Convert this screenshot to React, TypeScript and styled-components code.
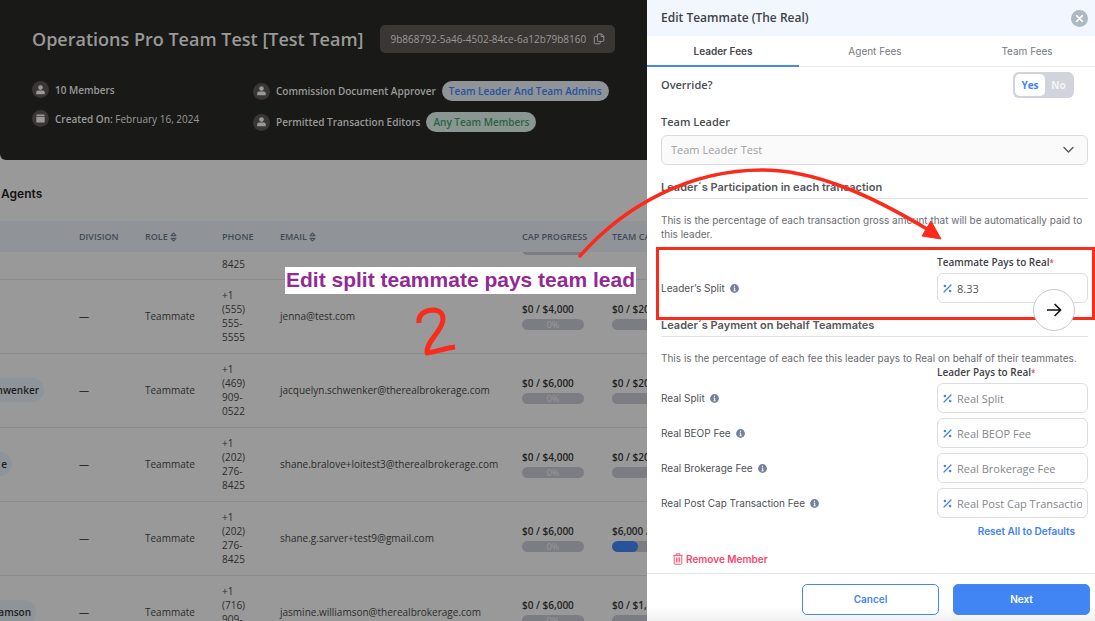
import React from "react";
import styled, { createGlobalStyle } from "styled-components";

const GlobalStyle = createGlobalStyle`
  *, *::before, *::after { box-sizing: border-box; }
  body { margin: 0; background: #999; font-family: "Open Sans", "Noto Sans", sans-serif; }
  h1, h2, h3, p, fieldset, dl, dd { margin: 0; padding: 0; border: 0; }
  button, input, select { font-family: inherit; }
  button { cursor: pointer; }
`;

const Screen = styled.div`
  position: relative;
  display: grid;
  grid-template-columns: minmax(0, 1fr) 448px;
  height: 100vh;
  overflow: hidden;
`;

const Page = styled.main`
  min-width: 0;
  overflow: hidden;
  background: #999;
`;

const Banner = styled.header`
  height: 160px;
  padding: 25px 32px 0;
  background: #191917;
  border-bottom-left-radius: 6px;
  color: #999;
`;

const TitleRow = styled.div`
  display: flex;
  align-items: center;
  gap: 17px;
  white-space: nowrap;
`;

const TeamTitle = styled.h1`
  font-size: 18px;
  line-height: 26px;
  font-weight: 600;
  color: #999;
`;

const IdButton = styled.button`
  display: flex;
  align-items: center;
  gap: 7px;
  height: 28px;
  padding: 0 10px;
  border: 0;
  border-radius: 5px;
  background: #3a3633;
  color: #999;
  font-size: 10px;
`;

const Facts = styled.div`
  display: grid;
  grid-template-columns: 221px auto;
  justify-content: start;
  margin-top: 28px;
`;

const FactList = styled.div<{ $gap: number }>`
  display: flex;
  flex-direction: column;
  gap: ${(p) => p.$gap}px;
`;

const Fact = styled.div<{ $h: number }>`
  display: flex;
  align-items: center;
  gap: 6px;
  height: ${(p) => p.$h}px;
  font-size: 10px;
  font-weight: 600;
  white-space: nowrap;

  span { font-weight: 400; }
`;

const FactIcon = styled.i`
  display: grid;
  place-items: center;
  width: 17px;
  height: 17px;
  border-radius: 50%;
  background: #3a3633;
`;

const Tag = styled.b<{ $tone: "blue" | "green" }>`
  height: 20px;
  padding: 0 7px;
  border-radius: 10px;
  line-height: 20px;
  font-weight: 600;
  background: ${(p) => (p.$tone === "blue" ? "#8f9499" : "#8a9691")};
  color: ${(p) => (p.$tone === "blue" ? "#28529b" : "#2a6247")};
`;

const AgentsTitle = styled.h2`
  padding: 24px 1px 18px;
  font-family: Inter, sans-serif;
  font-size: 12px;
  line-height: 19px;
  font-weight: 600;
  color: #141414;
`;

const AgentTable = styled.table`
  width: 100%;
  min-width: 742px;
  table-layout: fixed;
  border-collapse: collapse;
  font-size: 10px;
  line-height: 14px;
  color: #2c2c2c;

  td, th { padding: 0; text-align: left; white-space: nowrap; }
`;

const Col = styled.col<{ $w?: number }>`
  width: ${(p) => (p.$w ? `${p.$w}px` : "auto")};
`;

const HeadRow = styled.tr`
  height: 31px;
  background: #909397;
  color: #434a57;
  font-size: 9px;
  font-weight: 600;

  th { font-weight: 600; }
  svg { vertical-align: -2px; }
`;

const BodyRow = styled.tr<{ $cut?: boolean }>`
  height: ${(p) => (p.$cut ? 27 : 74)}px;
  border-bottom: 1px solid #8a8a8a;
  td { vertical-align: ${(p) => (p.$cut ? "top" : "middle")}; }
`;

const CutPhone = styled.div`
  padding-top: 5px;
`;

const CutMeter = styled.div`
  display: flex;
  flex-direction: column;
  justify-content: flex-end;
  height: 3px;
  overflow: hidden;
`;

const ChipWindow = styled.div<{ $w: number }>`
  display: flex;
  justify-content: flex-end;
  width: ${(p) => p.$w}px;
  overflow: hidden;
`;

const Chip = styled.span`
  flex: none;
  height: 24px;
  padding: 0 5px 0 16px;
  border-radius: 12px;
  background: #8f9499;
  color: #1e1e1e;
  font-weight: 600;
  line-height: 24px;
`;

const Cap = styled.div`
  margin-bottom: 3px;
  font-weight: 600;
  color: #222;
`;

const Meter = styled.div`
  flex: none;
  width: 62px;
  height: 11px;
  border-radius: 6px;
  overflow: hidden;
  background: #7c7d83;
  color: #999;
  font-size: 9px;
  line-height: 11px;
  text-align: center;
`;

const MeterFill = styled.div`
  height: 11px;
  border-radius: 6px;
  background: #285399;
`;

const Drawer = styled.aside`
  display: flex;
  flex-direction: column;
  min-width: 0;
  background: #fff;
  color: #4a4a4a;
`;

const DrawerHead = styled.header`
  display: flex;
  align-items: center;
  justify-content: space-between;
  height: 36px;
  padding: 0 7px 0 14px;
  background: #f2f6fe;

  h2 { font-size: 12px; line-height: 16px; font-weight: 600; color: #3f4146; }
`;

const CloseButton = styled.button`
  display: grid;
  padding: 0;
  border: 0;
  background: none;
`;

const Tabs = styled.div`
  display: flex;
  height: 31px;
  overflow: hidden;
`;

const Tab = styled.button<{ $active?: boolean }>`
  flex: 0 0 152px;
  height: 31px;
  padding: 0;
  border: 0;
  border-bottom: ${(p) => (p.$active ? "2px solid #4a86f0" : "1px solid #e9eaec")};
  background: none;
  font-family: Inter, sans-serif;
  font-size: 10px;
  font-weight: ${(p) => (p.$active ? 600 : 400)};
  color: ${(p) => (p.$active ? "#45474b" : "#77797d")};
`;

const Body = styled.form`
  flex: 1;
  padding: 5px 7px 0 14px;
`;

const OverrideRow = styled.fieldset`
  display: flex;
  align-items: center;
  justify-content: space-between;
  padding-right: 14px;
  height: 26px;
`;

const Caption = styled.label`
  display: block;
  font-size: 11px;
  line-height: 16px;
  font-weight: 600;
  color: #4a4c50;
`;

const Toggle = styled.div`
  display: flex;
  width: 61px;
  height: 26px;
  padding: 2px;
  border-radius: 6px;
  background: #d1d4dc;
`;

const Option = styled.label`
  flex: 1;
  border-radius: 5px;
  text-align: center;
  font-size: 10px;
  line-height: 22px;
  font-weight: 700;
  color: #f4f5f7;

  input { position: absolute; opacity: 0; pointer-events: none; }
  &:has(input:checked) { flex: 0 0 30px; background: #fff; color: #4585f3; }
`;

const LeaderField = styled.div`
  position: relative;
  display: flex;
  flex-direction: column;
  gap: 5px;
  margin-top: 16px;

  svg { position: absolute; right: 14px; bottom: 11px; pointer-events: none; }
`;

const LeaderSelect = styled.select`
  appearance: none;
  width: 100%;
  height: 30px;
  padding: 0 9px 2px;
  border: 1px solid #d9dbe2;
  border-radius: 6px;
  background: #fafafa;
  color: #a0a0a3;
  font-size: 11px;
  opacity: 1;
`;

const SectionTitle = styled.h3`
  margin-top: 14px;
  padding-bottom: 3px;
  border-bottom: 1px solid #dfe0e8;
  font-family: Inter, sans-serif;
  font-size: 11px;
  line-height: 16px;
  font-weight: 600;
  color: #55575b;
`;

const Hint = styled.p`
  margin-top: 14px;
  font-family: Inter, sans-serif;
  font-size: 10px;
  line-height: 14px;
  color: #6b6d71;
`;

const ColumnHead = styled.div<{ $top: number }>`
  width: 151px;
  margin: ${(p) => p.$top}px 0 0 auto;
  font-size: 10px;
  line-height: 14px;
  font-weight: 600;
  color: #3f4146;
  white-space: nowrap;

  em { color: #f0435f; font-size: 8px; font-style: normal; }
`;

const FeeList = styled.div`
  display: flex;
  flex-direction: column;
  gap: 5px;
  margin-top: 3px;
`;

const FeeRow = styled.div`
  display: grid;
  grid-template-columns: minmax(0, 1fr) 151px;
  align-items: center;
`;

const FeeLabel = styled.label`
  display: flex;
  align-items: center;
  gap: 5px;
  font-family: Inter, sans-serif;
  font-size: 10px;
  line-height: 14px;
  color: #505256;
`;

const PercentBox = styled.div`
  display: flex;
  align-items: center;
  gap: 5px;
  height: 30px;
  padding: 0 5px;
  border: 1px solid #dcdde4;
  border-radius: 6px;
  background: #fff;

  svg { flex: none; }
`;

const PercentInput = styled.input`
  flex: 1;
  min-width: 0;
  width: 100%;
  padding: 0;
  border: 0;
  outline: 0;
  background: none;
  font-size: 11px;
  color: #55575b;

  &::placeholder { color: #85878c; }
`;

const LinkButton = styled.button<{ $danger?: boolean }>`
  display: flex;
  align-items: center;
  gap: 3px;
  padding: 0;
  border: 0;
  background: none;
  font-family: Inter, sans-serif;
  font-size: 10px;
  line-height: 14px;
  font-weight: 600;
  color: ${(p) => (p.$danger ? "#f9466b" : "#3f80f5")};
  margin: ${(p) => (p.$danger ? "14px auto 0 12px" : "6px 13px 0 auto")};
`;

const Footer = styled.footer`
  display: flex;
  justify-content: flex-end;
  gap: 14px;
  height: 48px;
  padding: 10px 5px 0;
  border-top: 1px solid #e6e6e8;
  background: linear-gradient(#fff 70%, #f0f0f0);
`;

const FooterButton = styled.button<{ $primary?: boolean }>`
  width: 137px;
  height: 31px;
  padding: 0 0 2px;
  border: 1px solid #4a86f0;
  border-radius: 5px;
  background: ${(p) => (p.$primary ? "#4185f4" : "#fff")};
  color: ${(p) => (p.$primary ? "#fff" : "#4585f3")};
  font-family: Inter, sans-serif;
  font-size: 10px;
  font-weight: 600;
`;

/* Tutorial marks that float above the screen */

const Marks = styled.div`
  position: absolute;
  top: 0;
  right: 0;
  width: 810px;
  height: 360px;
  pointer-events: none;

  > svg { position: absolute; inset: 0; }
`;

const Note = styled.p`
  position: absolute;
  left: 0;
  top: 267px;
  width: 351px;
  height: 27px;
  background: #fff;
  color: #932a93;
  font-family: "Liberation Sans", sans-serif;
  font-size: 21px;
  font-weight: 700;
  line-height: 26px;
  text-align: center;
  white-space: nowrap;
`;

const Frame = styled.div`
  position: absolute;
  top: 247px;
  right: 0;
  width: 439px;
  height: 73px;
  border: 3px solid #fb2b1c;
`;

const NextStep = styled.button`
  position: absolute;
  top: 289px;
  right: 20px;
  display: grid;
  place-items: center;
  width: 42px;
  height: 42px;
  padding: 0;
  border: 1px solid #c9c9c9;
  border-radius: 50%;
  background: #fff;
  pointer-events: auto;
`;

const PersonIcon = () => (
  <svg width="9" height="10" viewBox="0 0 9 10" fill="#999">
    <circle cx="4.5" cy="2.6" r="2.3" />
    <path d="M0.2 9.2V7.6Q0.2 5.6 2.2 5.6H6.8Q8.8 5.6 8.8 7.6V9.2Z" />
  </svg>
);

const CalendarIcon = () => (
  <svg width="9" height="9" viewBox="0 0 9 9" fill="#999">
    <path d="M0.3 1.7Q0.3 0.6 1.4 0.6H7.6Q8.7 0.6 8.7 1.7V2H0.3Z" />
    <path d="M0.3 2.8H8.7V7.4Q8.7 8.6 7.5 8.6H1.5Q0.3 8.6 0.3 7.4Z" />
  </svg>
);

const CopyIcon = () => (
  <svg width="12" height="12" viewBox="0 0 12 12" fill="none" stroke="#999" strokeWidth="0.9" strokeLinejoin="round">
    <path d="M5.4 1H8.7L10.8 3V7.4Q10.8 8.4 9.8 8.4H5.4Q4.4 8.4 4.4 7.4V2Q4.4 1 5.4 1Z" />
    <path d="M8.2 1.2V3.5H10.6M4.3 3.4H2.3Q1.3 3.4 1.3 4.4V9.8Q1.3 10.8 2.3 10.8H6.3Q7.3 10.8 7.3 9.8V8.6" />
  </svg>
);

const SortIcon = () => (
  <svg width="7" height="10" viewBox="0 0 7 10" fill="none" stroke="#4e5460" strokeWidth="1.1" strokeLinejoin="round">
    <path d="M1 3.6L3.5 1L6 3.6ZM1 6.4L3.5 9L6 6.4Z" />
  </svg>
);

const CloseIcon = () => (
  <svg width="17" height="17" viewBox="0 0 17 17">
    <circle cx="8.5" cy="8.5" r="8.5" fill="#adb8c2" />
    <path d="M5.6 5.6L11.4 11.4M11.4 5.6L5.6 11.4" stroke="#fff" strokeWidth="1.5" strokeLinecap="round" />
  </svg>
);

const InfoIcon = () => (
  <svg width="9" height="9" viewBox="0 0 9 9">
    <circle cx="4.5" cy="4.5" r="4.4" fill="#74819a" />
    <path d="M4.5 1.7V2.9M3.7 4H4.7V6.6M3.5 6.8H5.6" stroke="#fff" strokeWidth="1" fill="none" />
  </svg>
);

const PercentIcon = () => (
  <svg width="9" height="9" viewBox="0 0 9 9">
    <path d="M1 8L8 1" stroke="#3f83f8" strokeWidth="1.2" strokeLinecap="round" />
    <circle cx="1.9" cy="2" r="1.3" fill="#3f83f8" />
    <circle cx="7.1" cy="7" r="1.3" fill="#3f83f8" />
  </svg>
);

const ChevronIcon = () => (
  <svg width="11" height="8" viewBox="0 0 11 8" fill="none" stroke="#55575b" strokeWidth="1.4" strokeLinecap="round" strokeLinejoin="round">
    <path d="M1 1.5L5.5 6L10 1.5" />
  </svg>
);

const TrashIcon = () => (
  <svg width="10" height="12" viewBox="0 0 10 12" fill="none" stroke="#f9466b" strokeWidth="0.9">
    <path d="M0.3 2.4H9.7M3.2 2.2V0.8H6.8V2.2M1.2 2.6V10.2Q1.2 11.3 2.3 11.3H7.7Q8.8 11.3 8.8 10.2V2.6M3.4 4.4V9.4M5 4.4V9.4M6.6 4.4V9.4" />
  </svg>
);

type Agent = {
  name?: string;
  nameEnd?: number;
  phone: string[];
  email: string;
  cap: string;
  teamCap: string;
  teamFill?: number;
};

const agents: Agent[] = [
  { phone: ["+1", "(555)", "555-", "5555"], email: "jenna@test.com", cap: "$0 / $4,000", teamCap: "$0 / $20,000" },
  { name: "hwenker", nameEnd: 44, phone: ["+1", "(469)", "909-", "0522"], email: "jacquelyn.schwenker@therealbrokerage.com", cap: "$0 / $6,000", teamCap: "$0 / $20,000" },
  { name: "e", nameEnd: 12, phone: ["+1", "(202)", "276-", "8425"], email: "shane.bralove+loitest3@therealbrokerage.com", cap: "$0 / $4,000", teamCap: "$0 / $20,000" },
  { phone: ["+1", "(202)", "276-", "8425"], email: "shane.g.sarver+test9@gmail.com", cap: "$0 / $6,000", teamCap: "$6,000 / $15,000", teamFill: 26 },
  { name: "amson", nameEnd: 36, phone: ["+1", "(716)", "909-"], email: "jasmine.williamson@therealbrokerage.com", cap: "$0 / $6,000", teamCap: "$0 / $1,000" },
];

const fees = ["Real Split", "Real BEOP Fee", "Real Brokerage Fee", "Real Post Cap Transaction Fee"];

type FeeFieldProps = { id: string; label: string; value?: string };

const FeeField = ({ id, label, value }: FeeFieldProps) => (
  <FeeRow>
    <FeeLabel htmlFor={id}>
      {label}
      <InfoIcon />
    </FeeLabel>
    <PercentBox>
      <PercentIcon />
      <PercentInput id={id} defaultValue={value} placeholder={label} />
    </PercentBox>
  </FeeRow>
);

const TeamBanner = () => (
  <Banner>
    <TitleRow>
      <TeamTitle>Operations Pro Team Test [Test Team]</TeamTitle>
      <IdButton type="button">
        9b868792-5a46-4502-84ce-6a12b79b8160
        <CopyIcon />
      </IdButton>
    </TitleRow>
    <Facts>
      <FactList $gap={12}>
        <Fact $h={17}><FactIcon><PersonIcon /></FactIcon>10 Members</Fact>
        <Fact $h={17}><FactIcon><CalendarIcon /></FactIcon><div>Created On: <span>February 16, 2024</span></div></Fact>
      </FactList>
      <FactList $gap={11}>
        <Fact $h={20}><FactIcon><PersonIcon /></FactIcon>Commission Document Approver<Tag $tone="blue">Team Leader And Team Admins</Tag></Fact>
        <Fact $h={20}><FactIcon><PersonIcon /></FactIcon>Permitted Transaction Editors<Tag $tone="green">Any Team Members</Tag></Fact>
      </FactList>
    </Facts>
  </Banner>
);

const Agents = () => (
  <section>
    <AgentsTitle>Agents</AgentsTitle>
    <AgentTable>
      <colgroup>
        <Col $w={79} /><Col $w={66} /><Col $w={77} /><Col $w={58} /><Col $w={242} /><Col $w={90} /><Col />
      </colgroup>
      <thead>
        <HeadRow>
          <th />
          <th>DIVISION</th>
          <th>ROLE <SortIcon /></th>
          <th>PHONE</th>
          <th>EMAIL <SortIcon /></th>
          <th>CAP PROGRESS</th>
          <th>TEAM CAP</th>
        </HeadRow>
      </thead>
      <tbody>
        <BodyRow $cut>
          <td /><td /><td />
          <td><CutPhone>8425</CutPhone></td>
          <td />
          <td><CutMeter><Meter /></CutMeter></td>
          <td />
        </BodyRow>
        {agents.map((a) => (
          <BodyRow key={a.email}>
            <td>{a.name && <ChipWindow $w={a.nameEnd ?? 0}><Chip>{a.name}</Chip></ChipWindow>}</td>
            <td>—</td>
            <td>Teammate</td>
            <td>{a.phone.map((line) => <div key={line}>{line}</div>)}{a.phone.length < 4 && <br />}</td>
            <td>{a.email}</td>
            <td><Cap>{a.cap}</Cap><Meter>0%</Meter></td>
            <td><Cap>{a.teamCap}</Cap><Meter>{a.teamFill && <MeterFill style={{ width: a.teamFill }} />}</Meter></td>
          </BodyRow>
        ))}
      </tbody>
    </AgentTable>
  </section>
);

const TeammateDrawer = () => (
  <Drawer>
    <DrawerHead>
      <h2>Edit Teammate (The Real)</h2>
      <CloseButton type="button" aria-label="Close"><CloseIcon /></CloseButton>
    </DrawerHead>
    <Tabs role="tablist">
      <Tab type="button" role="tab" aria-selected="true" $active>Leader Fees</Tab>
      <Tab type="button" role="tab" aria-selected="false">Agent Fees</Tab>
      <Tab type="button" role="tab" aria-selected="false">Team Fees</Tab>
    </Tabs>
    <Body>
      <OverrideRow aria-labelledby="override">
        <Caption as="span" id="override">Override?</Caption>
        <Toggle>
          <Option><input type="radio" name="override" defaultChecked />Yes</Option>
          <Option><input type="radio" name="override" />No</Option>
        </Toggle>
      </OverrideRow>
      <LeaderField>
        <Caption htmlFor="leader">Team Leader</Caption>
        <LeaderSelect id="leader" disabled><option>Team Leader Test</option></LeaderSelect>
        <ChevronIcon />
      </LeaderField>
      <SectionTitle>Leader´s Participation in each transaction</SectionTitle>
      <Hint>This is the percentage of each transaction gross amount that will be automatically paid to this leader.</Hint>
      <ColumnHead $top={14}>Teammate Pays to Real<em>*</em></ColumnHead>
      <FeeList>
        <FeeField id="leader-split" label="Leader’s Split" value="8.33" />
      </FeeList>
      <SectionTitle>Leader´s Payment on behalf Teammates</SectionTitle>
      <Hint>This is the percentage of each fee this leader pays to Real on behalf of their teammates.</Hint>
      <ColumnHead $top={0}>Leader Pays to Real<em>*</em></ColumnHead>
      <FeeList>
        {fees.map((fee, i) => <FeeField key={fee} id={`fee-${i}`} label={fee} />)}
      </FeeList>
      <LinkButton type="button">Reset All to Defaults</LinkButton>
      <LinkButton type="button" $danger><TrashIcon />Remove Member</LinkButton>
    </Body>
    <Footer>
      <FooterButton type="button">Cancel</FooterButton>
      <FooterButton type="button" $primary>Next</FooterButton>
    </Footer>
  </Drawer>
);

const TutorialMarks = () => (
  <Marks>
    <svg width="810" height="360" viewBox="285 0 810 360" fill="none" stroke="#fb2b1c">
      <path d="M580 256C625 205 690 170 762 170C815 170 870 195 927 229" strokeWidth="3.5" strokeLinecap="round" />
      <path d="M941 239L931 221L922 236Z" fill="#fb2b1c" strokeWidth="1" />
      <path d="M419 323C418 315 424 310 434 310C444 311 445 319 440 328C434 338 426 345 427 353C436 352 445 348 455 347" strokeWidth="5" strokeLinejoin="round" />
    </svg>
    <Note>Edit split teammate pays team lead</Note>
    <Frame />
    <NextStep type="button" aria-label="Next step">
      <svg width="16" height="14" viewBox="0 0 16 14" fill="none" stroke="#111" strokeWidth="1.6">
        <path d="M1 7H14.5M8.6 1L14.6 7L8.6 13" />
      </svg>
    </NextStep>
  </Marks>
);

export default function App() {
  return (
    <>
      <GlobalStyle />
      <Screen>
        <Page>
          <TeamBanner />
          <Agents />
        </Page>
        <TeammateDrawer />
        <TutorialMarks />
      </Screen>
    </>
  );
}
